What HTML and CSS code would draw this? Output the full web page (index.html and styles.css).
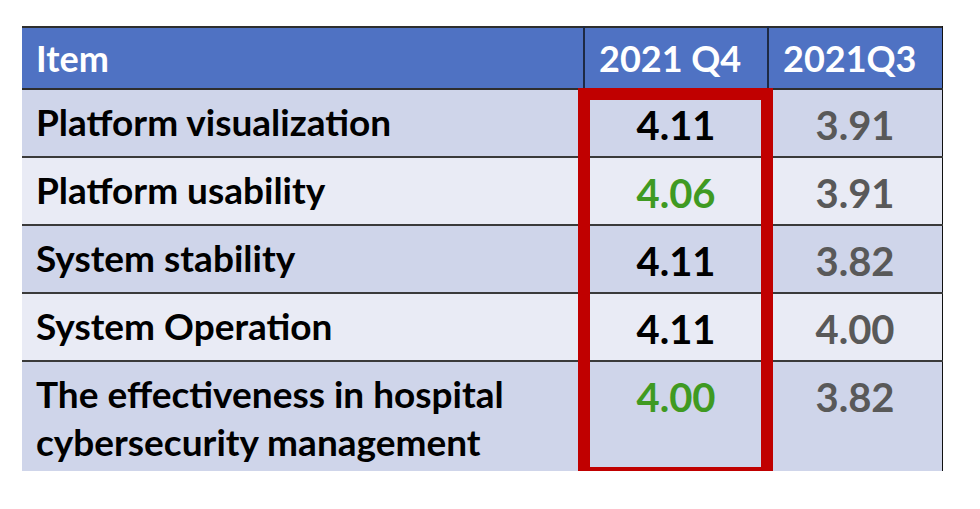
FILE: index.html
```html
<!DOCTYPE html>
<html lang="en">
<head>
<meta charset="utf-8">
<title>Survey scores</title>
<link rel="stylesheet" href="styles.css">
</head>
<body>
<div class="frame">
  <table class="scores">
    <colgroup>
      <col class="c-item">
      <col class="c-q4">
      <col class="c-q3">
    </colgroup>
    <thead>
      <tr>
        <th>Item</th>
        <th>2021 Q4</th>
        <th class="last">2021Q3</th>
      </tr>
    </thead>
    <tbody>
      <tr class="dark">
        <td class="label">Platform visualization</td>
        <td class="num">4.11</td>
        <td class="num prev">3.91</td>
      </tr>
      <tr class="light">
        <td class="label">Platform usability</td>
        <td class="num up">4.06</td>
        <td class="num prev">3.91</td>
      </tr>
      <tr class="dark">
        <td class="label">System stability</td>
        <td class="num">4.11</td>
        <td class="num prev">3.82</td>
      </tr>
      <tr class="light">
        <td class="label">System Operation</td>
        <td class="num">4.11</td>
        <td class="num prev">4.00</td>
      </tr>
      <tr class="dark tall">
        <td class="label">The effectiveness in hospital<br>cybersecurity management</td>
        <td class="num up">4.00</td>
        <td class="num prev">3.82</td>
      </tr>
    </tbody>
  </table>
  <div class="highlight"></div>
</div>
</body>
</html>
```

FILE: styles.css
```css
html, body {
  margin: 0;
  padding: 0;
  background: #ffffff;
}

.frame {
  position: relative;
  width: 921px;
  height: 445px;
  margin: 26px 0 0 22px;
  overflow: hidden;
}

.scores {
  border-collapse: collapse;
  table-layout: fixed;
  width: 921px;
  font-family: Lato, "Open Sans", sans-serif;
  font-weight: 700;
  border-top: 2px solid #2e2e2e;
  border-right: 2px solid #111111;
}

.c-item { width: 562px; }
.c-q4 { width: 184px; }
.c-q3 { width: 175px; }

.scores th {
  background: #4f72c3;
  color: #ffffff;
  text-align: left;
  font-size: 36px;
  height: 60px;
  padding: 0 0 0 14px;
  vertical-align: middle;
  border-bottom: 2px solid #2e2e2e;
  border-right: 2px solid #1e2a44;
  line-height: 40px;
}

.scores th.last {
  border-right: none;
}

.scores td {
  vertical-align: top;
  border-bottom: 2px solid #3a3a3a;
  padding: 8px 0 0 0;
  height: 58px;
}

.scores tr.tall td {
  height: 101px;
  border-bottom: none;
}

.dark td { background: #cfd5ea; }
.light td { background: #e9ebf5; }

.scores td.label {
  color: #000000;
  font-size: 37px;
  line-height: 48px;
  padding-left: 14px;
}

.scores td.num {
  color: #000000;
  text-align: center;
  font-size: 40px;
  line-height: 54px;
}

.scores td.up { color: #3f9a22; }
.scores td.prev { color: #595959; }

.highlight {
  position: absolute;
  left: 556px;
  top: 62px;
  width: 195px;
  height: 391px;
  box-sizing: border-box;
  border: 12px solid #c00000;
}
```
